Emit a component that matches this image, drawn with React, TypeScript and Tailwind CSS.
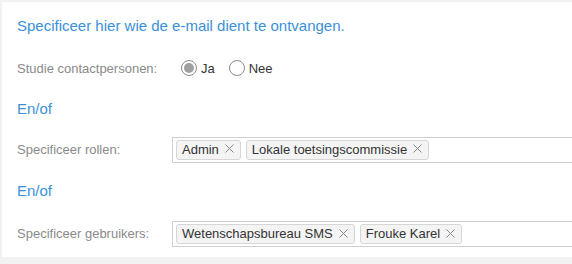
import React from "react";

const Tag: React.FC<{ label: string }> = ({ label }) => (
  <span className="flex h-[20px] items-center gap-[6px] rounded-[3px] border border-[#d6d6d6] bg-[#f4f4f4] pl-[5px] pr-[6px] text-[13px] text-[#333]">
    {label}
    <svg width="9" height="9" viewBox="0 0 9 9" className="mb-[2px]">
      <path d="M0.5 0.5 L8.5 8.5 M8.5 0.5 L0.5 8.5" stroke="#888" strokeWidth="1" />
    </svg>
  </span>
);

const Radio: React.FC<{ checked?: boolean; label: string }> = ({ checked, label }) => (
  <label className="flex items-center gap-[4px] text-[13px] text-[#333]">
    <span className="flex h-[16px] w-[16px] items-center justify-center rounded-full border border-[#8a8a8a] bg-white">
      {checked && <span className="h-[10px] w-[10px] rounded-full bg-[#a0a0a0]" />}
    </span>
    {label}
  </label>
);

const TagRow: React.FC<{ label: string; tags: string[] }> = ({ label, tags }) => (
  <div className="flex items-center">
    <span className="w-[155px] shrink-0 text-[13px] text-[#8a8a8a]">{label}</span>
    <div className="flex h-[26px] flex-1 items-center gap-[5px] border border-[#cfcfcf] pl-[3px]">
      {tags.map((t) => (
        <Tag key={t} label={t} />
      ))}
    </div>
  </div>
);

const App: React.FC = () => {
  return (
    <div
      className="h-[264px] w-[572px] overflow-hidden bg-[#f2f2f2] pl-[2px] pt-[2px]"
      style={{ fontFamily: '"Liberation Sans", Arial, sans-serif' }}
    >
      <div className="h-[255px] w-[600px] bg-white pl-[15px]">
        <h2 className="pt-[13px] text-[15px] text-[#3b90d8]">
          Specificeer hier wie de e-mail dient te ontvangen.
        </h2>
        <div className="mt-[21px] flex items-center">
          <span className="w-[164px] shrink-0 text-[13px] text-[#8a8a8a]">Studie contactpersonen:</span>
          <div className="flex items-center gap-[14px]">
            <Radio checked label="Ja" />
            <Radio label="Nee" />
          </div>
        </div>
        <p className="mt-[20px] text-[15px] text-[#3b90d8]">En/of</p>
        <div className="mt-[16px]">
          <TagRow label="Specificeer rollen:" tags={["Admin", "Lokale toetsingscommissie"]} />
        </div>
        <p className="mt-[17px] text-[15px] text-[#3b90d8]">En/of</p>
        <div className="mt-[19px]">
          <TagRow label="Specificeer gebruikers:" tags={["Wetenschapsbureau SMS", "Frouke Karel"]} />
        </div>
      </div>
    </div>
  );
};

export default App;
